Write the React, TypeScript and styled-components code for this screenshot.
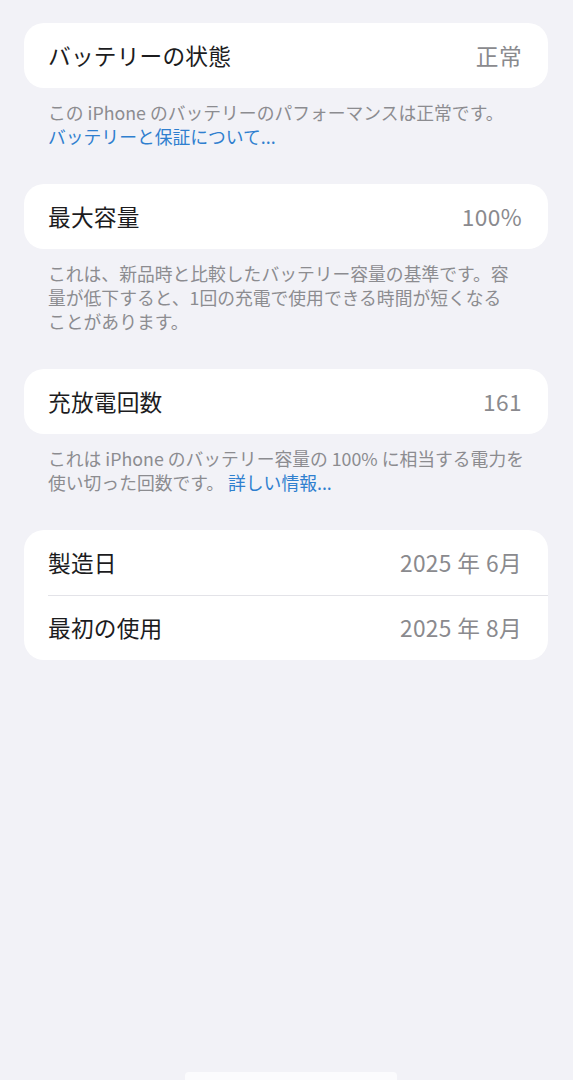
import React from 'react';
import styled, { createGlobalStyle } from 'styled-components';

const GlobalStyle = createGlobalStyle`
  html, body {
    margin: 0;
    padding: 0;
    background: #f2f2f7;
  }
  body {
    font-family: "Noto Sans CJK JP", "Noto Sans", "Liberation Sans", sans-serif;
    -webkit-font-smoothing: antialiased;
  }
`;

const Page = styled.div`
  min-height: 1080px;
  box-sizing: border-box;
  padding: 23px 25px 0 24px;
  display: flex;
  flex-direction: column;
`;

const Section = styled.section`
  margin-bottom: 36px;
`;

const Card = styled.div`
  background: #fff;
  border-radius: 20px;
  overflow: hidden;
`;

const Row = styled.div`
  height: 65px;
  display: flex;
  align-items: center;
  justify-content: space-between;
  padding: 0 26px 0 24px;
  position: relative;

  & + &::before {
    content: '';
    position: absolute;
    top: 0;
    left: 24px;
    right: 0;
    height: 1px;
    background: #e3e3e8;
  }
`;

const Label = styled.span`
  font-size: 22.7px;
  color: #1c1c1e;
  letter-spacing: 0.2px;
  margin-top: -1px;
`;

const Value = styled.span`
  font-size: 22.7px;
  color: #8a8a8e;
  letter-spacing: 0.4px;
  margin-top: -1px;
`;

const Footer = styled.p`
  margin: 0;
  padding: 12px 24px 0;
  font-size: 17.8px;
  line-height: 24px;
  color: #8c8c90;
  white-space: nowrap;
`;

const Link = styled.a`
  color: #2f7fcf;
  text-decoration: none;
`;

const HomeBar = styled.div`
  margin-top: auto;
  align-self: center;
  width: 212px;
  height: 8px;
  margin-left: 10px;
  border-radius: 4px 4px 0 0;
  background: #fbfbfd;
`;

interface InfoRow {
  label: string;
  value: string;
}

const InfoCard: React.FC<{ rows: InfoRow[] }> = ({ rows }) => (
  <Card>
    {rows.map(row => (
      <Row key={row.label}>
        <Label>{row.label}</Label>
        <Value>{row.value}</Value>
      </Row>
    ))}
  </Card>
);

const App: React.FC = () => (
  <>
    <GlobalStyle />
    <Page>
      <Section>
        <InfoCard rows={[{ label: 'バッテリーの状態', value: '正常' }]} />
        <Footer>
          この iPhone のバッテリーのパフォーマンスは正常です。
          <br />
          <Link href="#">バッテリーと保証について...</Link>
        </Footer>
      </Section>

      <Section>
        <InfoCard rows={[{ label: '最大容量', value: '100%' }]} />
        <Footer>
          これは、新品時と比較したバッテリー容量の基準です。容
          <br />
          量が低下すると、1回の充電で使用できる時間が短くなる
          <br />
          ことがあります。
        </Footer>
      </Section>

      <Section>
        <InfoCard rows={[{ label: '充放電回数', value: '161' }]} />
        <Footer>
          これは iPhone のバッテリー容量の 100% に相当する電力を
          <br />
          使い切った回数です。 <Link href="#">詳しい情報...</Link>
        </Footer>
      </Section>

      <Section>
        <InfoCard
          rows={[
            { label: '製造日', value: '2025 年 6月' },
            { label: '最初の使用', value: '2025 年 8月' }
          ]}
        />
      </Section>

      <HomeBar />
    </Page>
  </>
);

export default App;
